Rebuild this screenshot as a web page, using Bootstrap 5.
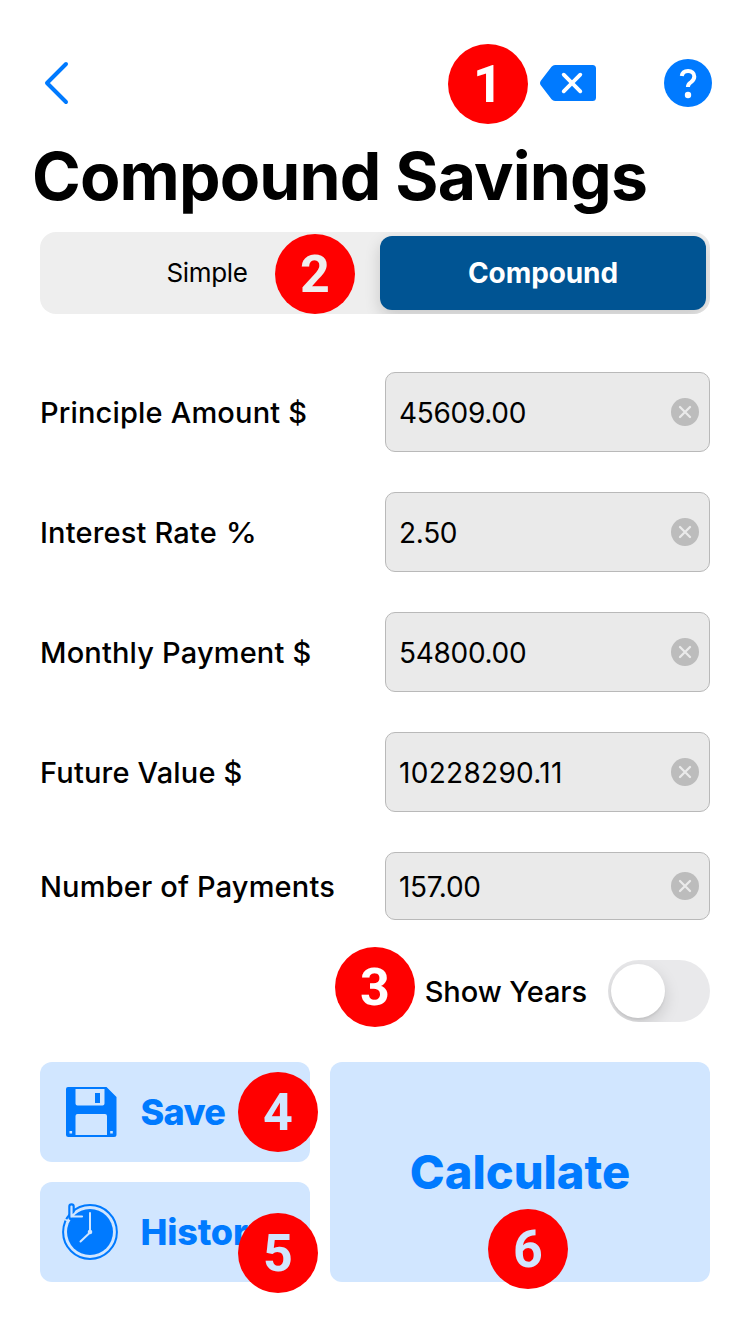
<!DOCTYPE html>
<html lang="en">
<head>
<meta charset="utf-8">
<meta name="viewport" content="width=device-width, initial-scale=1">
<title>Compound Savings</title>
<link href="https://cdn.jsdelivr.net/npm/bootstrap@5.3.0/dist/css/bootstrap.min.css" rel="stylesheet">
<style>
  body { font-family: Inter, "Liberation Sans", sans-serif; color: #000; background: #fff; }
  .screen { width: 750px; height: 1334px; padding: 43px 40px 0; overflow: hidden; }
  .topbar { height: 80px; padding: 0 0 0 4px; margin-right: -2px; }
  .topbar-actions { gap: 68px; }
  .screen-title { height: 109px; margin: 0 0 0 -8px; font-size: 66px; font-weight: 700; line-height: 107px; letter-spacing: -.85px; white-space: nowrap; }
  .segments { height: 82px; padding: 4px; border-radius: 16px; background: #eee; overflow: hidden; font-size: 26px; }
  .segment { flex: 1 1 0; border-radius: 12px; }
  .segment-idle { padding: 0 10px 1px 0; letter-spacing: -.35px; }
  .segment-active { flex: 0 0 326px; background: #005493; color: #fff; font-size: 28px; font-weight: 700; letter-spacing: -.1px; box-shadow: 0 6px 16px rgba(0,0,0,.16); }
  .fields { margin-top: 58px; gap: 40px; }
  .field-label { flex: 0 0 345px; font-size: 29px; font-weight: 450; letter-spacing: .17px; white-space: nowrap; padding-top: 1px; }
  .percent { display: inline-block; margin-left: 2px; transform: scaleX(1.08); }
  .field-value { flex: 0 0 325px; width: 325px; height: 80px; padding: 0 10px 0 13px; border: 1px solid #b9b9b9; border-radius: 10px; background: #eaeaea; color: #000; font-size: 28px; letter-spacing: -.3px; }
  .field-value > span { padding-top: 1px; }
  .field-long { letter-spacing: .3px; }
  .field-short .field-value { height: 68px; }
  .years-row { height: 62px; margin-top: 40px; gap: 21px; font-size: 29px; font-weight: 450; letter-spacing: -.1px; }
  .years-row > span { padding-top: 1px; }
  .toggle { width: 102px; height: 62px; padding: 4px; border-radius: 31px; background: #e9e9eb; overflow: hidden; }
  .toggle-knob { width: 54px; height: 54px; margin-left: -1px; border-radius: 50%; background: #fff; box-shadow: 0 6px 16px rgba(0,0,0,.15), 0 2px 2px rgba(0,0,0,.06); }
  .actions { margin-top: 40px; gap: 20px; }
  .actions-side { width: 270px; gap: 20px; }
  .action-btn { --bs-btn-color: #007aff; --bs-btn-bg: #d1e6ff; --bs-btn-border-width: 0; border-radius: 12px; font-weight: 800; }
  .action-small { height: 100px; padding: 0 20px; font-size: 36px; letter-spacing: -.7px; }
  .action-small span { margin-left: 18.500px; }
  .action-history { letter-spacing: -.2px; }
  .action-large { font-size: 47px; letter-spacing: 0; }
  .step { position: absolute; width: 80px; height: 80px; border-radius: 50%; background: #f00; color: #fff; font: 700 52px/82px Roboto, sans-serif; text-align: center; }
  .step-1 { left: 448px; top: 44px; }
  .step-2 { left: 275px; top: 234px; color: #eee; }
  .step-3 { left: 335px; top: 947px; }
  .step-4 { left: 238px; top: 1072px; color: #d1e6ff; }
  .step-5 { left: 238px; top: 1213px; color: #d1e6ff; }
  .step-6 { left: 488px; top: 1209px; color: #d1e6ff; }
</style>
</head>
<body>
<svg class="d-none">
  <symbol id="clear" viewBox="0 0 28 28"><circle cx="14" cy="14" r="14" fill="#bcbcbc"/><path d="M9 9l10 10M19 9L9 19" stroke="#eaeaea" stroke-width="2.3" stroke-linecap="round"/></symbol>
</svg>
<main class="screen position-relative d-flex flex-column">
  <header class="topbar d-flex align-items-center justify-content-between">
    <svg width="26" height="44" viewBox="0 0 26 44" fill="none" stroke="#007aff" stroke-width="4" stroke-linecap="round" stroke-linejoin="round"><path d="M22 3L3 22l19 19"/></svg>
    <div class="topbar-actions d-flex align-items-center">
      <svg width="56" height="36" viewBox="0 0 56 36"><path d="M15 0H52.500a3.500 3.500 0 0 1 3.500 3.500V32.500a3.500 3.500 0 0 1-3.500 3.500H15q-2 0-3.500-1.700L.8 20.300Q-.8 18 .8 15.700L11.500 1.700Q13 0 15 0Z" fill="#007aff"/><path d="M23.700 9.700l16.600 16.600M40.300 9.700L23.700 26.300" stroke="#fff" stroke-width="3.800" stroke-linecap="round"/></svg>
      <svg width="48" height="48" viewBox="0 0 48 48"><circle cx="24" cy="24" r="24" fill="#007aff"/><path d="M17.800 17C18.200 13.700 20.600 11.900 24.100 11.900C27.700 11.900 30.300 14.200 30.300 17.500C30.300 20.100 29 21.500 27.200 23C25 24.700 23.900 25.200 23.900 28" fill="none" stroke="#fff" stroke-width="4" stroke-linecap="butt"/><circle cx="24" cy="36" r="3.200" fill="#fff"/></svg>
    </div>
  </header>
  <h1 class="screen-title">Compound Savings</h1>

  <div class="segments d-flex">
    <div class="segment segment-idle d-flex align-items-center justify-content-center">Simple</div>
    <div class="segment segment-active d-flex align-items-center justify-content-center">Compound</div>
  </div>

  <div class="fields d-flex flex-column">
    <div class="d-flex align-items-center"><span class="field-label">Principle Amount $</span><output class="field-value form-control d-flex align-items-center justify-content-between"><span>45609.00</span><svg width="28" height="28"><use href="#clear"/></svg></output></div>
    <div class="d-flex align-items-center"><span class="field-label">Interest Rate <span class="percent">%</span></span><output class="field-value form-control d-flex align-items-center justify-content-between"><span>2.50</span><svg width="28" height="28"><use href="#clear"/></svg></output></div>
    <div class="d-flex align-items-center"><span class="field-label">Monthly Payment $</span><output class="field-value form-control d-flex align-items-center justify-content-between"><span>54800.00</span><svg width="28" height="28"><use href="#clear"/></svg></output></div>
    <div class="d-flex align-items-center"><span class="field-label">Future Value $</span><output class="field-value form-control d-flex align-items-center justify-content-between"><span class="field-long">10228290.11</span><svg width="28" height="28"><use href="#clear"/></svg></output></div>
    <div class="field-short d-flex align-items-center"><span class="field-label">Number of Payments</span><output class="field-value form-control d-flex align-items-center justify-content-between"><span>157.00</span><svg width="28" height="28"><use href="#clear"/></svg></output></div>
  </div>

  <div class="years-row d-flex align-items-center justify-content-end">
    <span>Show Years</span>
    <div class="toggle" role="switch" aria-checked="false" aria-label="Show Years"><div class="toggle-knob"></div></div>
  </div>

  <div class="actions d-flex">
    <div class="actions-side d-flex flex-column">
      <button class="btn action-btn action-small d-flex align-items-center" type="button">
        <svg width="62" height="62" viewBox="0 0 62 62"><path fill="#007aff" fill-rule="evenodd" d="M8 6H46.500L56.500 16V53.500a2.500 2.500 0 0 1-2.500 2.500H8.500A2.500 2.500 0 0 1 6 53.500V8a2 2 0 0 1 2-2ZM15.500 8V22.500a2 2 0 0 0 2 2H42.500a2 2 0 0 0 2-2V8ZM17.500 33a2 2 0 0 0-2 2V54H47V35a2 2 0 0 0-2-2ZM9.500 50v2.600h2.600V50ZM50.200 50v2.600h2.600V50Z"/><path fill="#007aff" d="M35 12h5v10h-5z"/></svg>
        <span>Save</span>
      </button>
      <button class="btn action-btn action-small action-history d-flex align-items-center" type="button">
        <svg width="62" height="62" viewBox="0 0 62 62" fill="none"><circle cx="30" cy="31" r="26.900" stroke="#007aff" stroke-width="2"/><circle cx="30" cy="31" r="23" fill="#007aff"/><path d="M11.500 5.500v10.500H22" stroke="#007aff" stroke-width="6.500" stroke-linecap="round" stroke-linejoin="round"/><path d="M11.500 5.500v10H22M11.500 15.500L17 10.500" stroke="#d1e6ff" stroke-width="2.200" stroke-linecap="round"/><path d="M5 18.500L8.500 20" stroke="#d1e6ff" stroke-width="1.500"/><path d="M30 12v19M29.500 32L20.500 40.500" stroke="#d1e6ff" stroke-width="2" stroke-linecap="round"/><circle cx="30" cy="31" r="2.300" fill="#d1e6ff"/></svg>
        <span>History</span>
      </button>
    </div>
    <button class="btn action-btn action-large flex-grow-1" type="button">Calculate</button>
  </div>

  <span class="step step-1">1</span>
  <span class="step step-2">2</span>
  <span class="step step-3">3</span>
  <span class="step step-4">4</span>
  <span class="step step-5">5</span>
  <span class="step step-6">6</span>
</main>
<script src="https://cdn.jsdelivr.net/npm/bootstrap@5.3.0/dist/js/bootstrap.bundle.min.js"></script>
</body>
</html>
